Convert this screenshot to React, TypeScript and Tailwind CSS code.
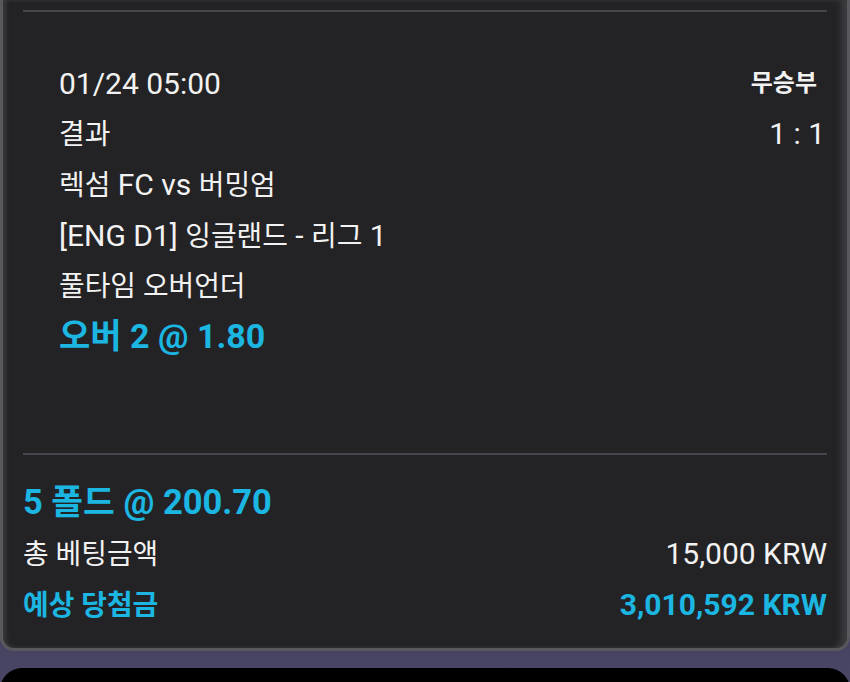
function K({ children }: { children: React.ReactNode }) {
  // Noto CJK hangul runs a bit wider than the device font, so shrink it slightly
  return <span className="text-[0.93em]">{children}</span>;
}

export default function App() {
  const line = "h-[50.6px] flex items-center whitespace-pre";
  return (
    <div className="w-[850px] h-[682px] overflow-hidden bg-gradient-to-b from-[#1c1b24] via-[#2a2838] to-[#4a4666] font-['Roboto','Noto_Sans_CJK_KR',sans-serif] text-[#f2f2f2]">
      <div className="h-[651px] rounded-b-[14px] bg-[#232325] border-x-[3px] border-b-[3px] border-[#58585d] shadow-[inset_4px_0_4px_-1px_#3a3a3e,inset_-8px_0_6px_-2px_#3c3c40] px-[20px]">
        <div className="pt-[10px]">
          <div className="h-[2px] bg-[#47464f]" />
        </div>

        <div className="pt-[46px] pl-[36px] text-[30px]">
          <div className={`${line} justify-between`}>
            <span>01/24 05:00</span>
            <span className="text-[24px] font-bold mr-[10px]">무승부</span>
          </div>
          <div className={`${line} justify-between`}>
            <span><K>결과</K></span>
            <span className="mr-[2px]">1 : 1</span>
          </div>
          <div className={line}><span><K>렉섬</K> FC vs <K>버밍엄</K></span></div>
          <div className={line}><span>[ENG D1] <K>잉글랜드</K> - <K>리그</K> 1</span></div>
          <div className={line}><span><K>풀타임 오버언더</K></span></div>
          <div className={`${line} font-bold text-[#1cb6e2] text-[34px]`}>오버 2 @ 1.80</div>
        </div>

        <div className="mt-[91px] h-[2px] bg-[#47464f]" />

        <div className="pt-[23px]">
          <div className={`${line} font-bold text-[#1cb6e2] text-[34.5px]`}>5 폴드 @ 200.70</div>
          <div className={`${line} justify-between text-[30px]`}>
            <span><K>총 베팅금액</K></span>
            <span>15,000 KRW</span>
          </div>
          <div className={`${line} justify-between text-[30px] font-bold text-[#1cb6e2]`}>
            <span><K>예상 당첨금</K></span>
            <span>3,010,592 KRW</span>
          </div>
        </div>
      </div>

      <div className="mt-[17px] h-[40px] rounded-t-[22px] bg-black" />
    </div>
  );
}
